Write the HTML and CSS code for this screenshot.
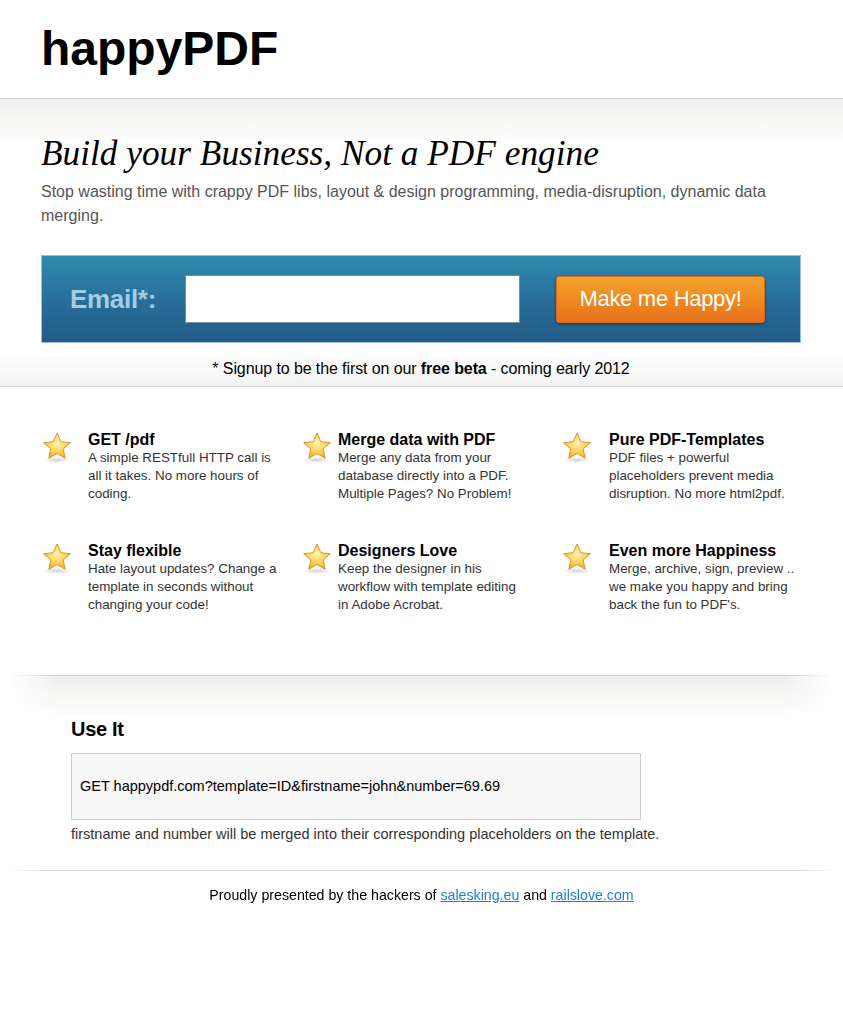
FILE: index.html
```html
<!DOCTYPE html>
<html lang="en">
<head>
<meta charset="utf-8">
<title>happyPDF</title>
<link rel="stylesheet" href="styles.css">
</head>
<body>
<svg class="defs" width="0" height="0" aria-hidden="true">
  <defs>
    <radialGradient id="starFill" cx="50%" cy="40%" r="60%">
      <stop offset="0" stop-color="#fff6b0"/>
      <stop offset="0.55" stop-color="#fbd35c"/>
      <stop offset="1" stop-color="#f2a92e"/>
    </radialGradient>
    <radialGradient id="starShadow" cx="50%" cy="50%" r="50%">
      <stop offset="0" stop-color="#000" stop-opacity="0.18"/>
      <stop offset="1" stop-color="#000" stop-opacity="0"/>
    </radialGradient>
    <symbol id="star" viewBox="0 0 32 34">
      <ellipse cx="16" cy="30" rx="14" ry="3" fill="url(#starShadow)"/>
      <path d="M16 3 L19.82 11.74 L29.31 12.67 L22.18 19.01 L24.23 28.33 L16 23.5 L7.77 28.33 L9.82 19.01 L2.69 12.67 L12.18 11.74 Z" fill="url(#starFill)" stroke="#d8962c" stroke-width="1" stroke-linejoin="round"/>
    </symbol>
  </defs>
</svg>

<header class="site-header">
  <h1 class="logo">happyPDF</h1>
</header>

<section class="hero">
  <h2 class="hero-title">Build your Business, Not a PDF engine</h2>
  <p class="hero-sub">Stop wasting time with crappy PDF libs, layout &amp; design programming, media-disruption, dynamic data merging.</p>
  <form class="signup" onsubmit="return false">
    <label class="signup-label" for="email">Email*:</label>
    <input class="signup-input" id="email" type="text">
    <button class="signup-btn" type="submit">Make me Happy!</button>
  </form>
  <p class="signup-note">* Signup to be the first on our <b>free beta</b> - coming early 2012</p>
</section>

<section class="features">
  <div class="feature">
    <svg class="star"><use href="#star"/></svg>
    <div class="feature-text">
      <h3>GET /pdf</h3>
      <p>A simple RESTfull HTTP call is<br>all it takes. No more hours of<br>coding.</p>
    </div>
  </div>
  <div class="feature feature-mid">
    <svg class="star"><use href="#star"/></svg>
    <div class="feature-text">
      <h3>Merge data with PDF</h3>
      <p>Merge any data from your<br>database directly into a PDF.<br>Multiple Pages? No Problem!</p>
    </div>
  </div>
  <div class="feature feature-right">
    <svg class="star"><use href="#star"/></svg>
    <div class="feature-text">
      <h3>Pure PDF-Templates</h3>
      <p>PDF files + powerful<br>placeholders prevent media<br>disruption. No more html2pdf.</p>
    </div>
  </div>
  <div class="feature">
    <svg class="star"><use href="#star"/></svg>
    <div class="feature-text">
      <h3>Stay flexible</h3>
      <p>Hate layout updates? Change a<br>template in seconds without<br>changing your code!</p>
    </div>
  </div>
  <div class="feature feature-mid">
    <svg class="star"><use href="#star"/></svg>
    <div class="feature-text">
      <h3>Designers Love</h3>
      <p>Keep the designer in his<br>workflow with template editing<br>in Adobe Acrobat.</p>
    </div>
  </div>
  <div class="feature feature-right">
    <svg class="star"><use href="#star"/></svg>
    <div class="feature-text">
      <h3>Even more Happiness</h3>
      <p>Merge, archive, sign, preview ..<br>we make you happy and bring<br>back the fun to PDF's.</p>
    </div>
  </div>
</section>

<div class="divider"></div>

<section class="use-it">
  <h2 class="use-title">Use It</h2>
  <div class="code-box">GET happypdf.com?template=ID&amp;firstname=john&amp;number=69.69</div>
  <p class="use-note">firstname and number will be merged into their corresponding placeholders on the template.</p>
</section>

<footer class="site-footer">
  <p>Proudly presented by the hackers of <a href="#">salesking.eu</a> and <a href="#">railslove.com</a></p>
</footer>
</body>
</html>
```

FILE: styles.css
```css
html, body {
  margin: 0;
  padding: 0;
  background: #fff;
}
body {
  font-family: "Liberation Sans", Arial, sans-serif;
  color: #000;
}
.defs {
  position: absolute;
  width: 0;
  height: 0;
  overflow: hidden;
}

/* header */
.site-header {
  padding: 25px 41px;
  border-bottom: 1px solid #cfcfcf;
}
.logo {
  margin: 0;
  font-size: 48px;
  line-height: 48px;
  font-weight: bold;
}

/* hero */
.hero {
  padding: 35px 42px 0 41px;
  background: linear-gradient(to bottom, #f1f1ef 0, #ffffff 50px, #ffffff 250px, #f6f6f6 280px, #f2f2f2 100%);
  border-bottom: 1px solid #d6d6d6;
}
.hero-title {
  margin: 0;
  font-family: "Liberation Serif", "Times New Roman", serif;
  font-style: italic;
  font-weight: normal;
  font-size: 35.3px;
  line-height: 40px;
  color: #000;
}
.hero-sub {
  margin: 6px 0 0;
  font-size: 16px;
  line-height: 24px;
  color: #555;
}
.signup {
  margin: 27px 0 0;
  display: flex;
  align-items: center;
  height: 86px;
  border: 1px solid #9fbfd2;
  background: linear-gradient(to bottom, #2f8aaf 0, #276d98 55%, #215b85 100%);
  padding: 0 0 0 28px;
}
.signup-label {
  font-size: 26px;
  font-weight: bold;
  color: #a3cde1;
  width: 115px;
  line-height: 30px;
  letter-spacing: -0.3px;
}
.signup-input {
  box-sizing: border-box;
  width: 335px;
  height: 48px;
  margin: 0;
  border: 1px solid #7f8b96;
  background: #fff;
  padding: 0 8px;
  font-size: 18px;
}
.signup-btn {
  box-sizing: border-box;
  margin: 0 0 0 36px;
  width: 209px;
  height: 47px;
  border: 1px solid #d9691a;
  border-radius: 3px;
  background: linear-gradient(to bottom, #f3a32b 0, #ee8a22 50%, #e8701b 100%);
  box-shadow: 0 1px 3px rgba(0, 0, 0, 0.45);
  color: #fff;
  font-family: "Liberation Sans", Arial, sans-serif;
  font-size: 22px;
  letter-spacing: -0.3px;
  padding: 0;
}
.signup-note {
  margin: 0;
  padding: 16px 0 7px;
  text-align: center;
  font-size: 16px;
  line-height: 20px;
  color: #000;
  letter-spacing: -0.1px;
}
.signup-note b {
  font-weight: bold;
}

/* features */
.features {
  display: grid;
  grid-template-columns: 260px 260px 1fr;
  row-gap: 38px;
  padding: 43px 0 61px 41px;
}
.feature {
  display: flex;
  align-items: flex-start;
}
.star {
  flex: none;
  width: 32px;
  height: 34px;
  margin-top: 0;
}
.feature-text {
  margin-left: 15px;
}
.feature-mid .feature-text {
  margin-left: 5px;
}
.feature-right .feature-text {
  margin-left: 16px;
}
.feature-text h3 {
  margin: 0;
  font-size: 16px;
  line-height: 19px;
  font-weight: bold;
  color: #000;
  white-space: nowrap;
}
.feature-text p {
  margin: 0;
  font-size: 13.4px;
  line-height: 18px;
  color: #333;
  white-space: nowrap;
}

/* divider */
.divider {
  height: 44px;
  border-top: 1px solid #cfcfcf;
  margin: 0 8px;
  background: linear-gradient(to bottom, #efefed 0, rgba(255, 255, 255, 0) 100%);
  -webkit-mask-image: linear-gradient(to right, transparent 0, #000 6%, #000 94%, transparent 100%);
  mask-image: linear-gradient(to right, transparent 0, #000 6%, #000 94%, transparent 100%);
}

/* use it */
.use-it {
  padding: 0 0 0 71px;
}
.use-title {
  margin: -3px 0 0;
  font-size: 20px;
  line-height: 24px;
  font-weight: bold;
  letter-spacing: -0.3px;
}
.code-box {
  margin-top: 12px;
  width: 560px;
  padding: 24px 0 24px 8px;
  border: 1px solid #cccccc;
  background: #f7f7f7;
  font-size: 14.5px;
  line-height: 17px;
  color: #000;
}
.use-note {
  margin: 5px 0 0;
  font-size: 14.5px;
  line-height: 18px;
  color: #333;
}

/* footer */
.site-footer {
  margin: 27px 8px 0;
  border-top: 1px solid #d4d4d4;
  -webkit-mask-image: linear-gradient(to right, transparent 0, #000 5%, #000 95%, transparent 100%);
  mask-image: linear-gradient(to right, transparent 0, #000 5%, #000 95%, transparent 100%);
  padding: 15px 0 40px;
  text-align: center;
}
.site-footer p {
  margin: 0;
  font-size: 14.2px;
  line-height: 18px;
  color: #000;
}
.site-footer a {
  color: #1f7fe0;
  text-decoration: underline;
}
```
